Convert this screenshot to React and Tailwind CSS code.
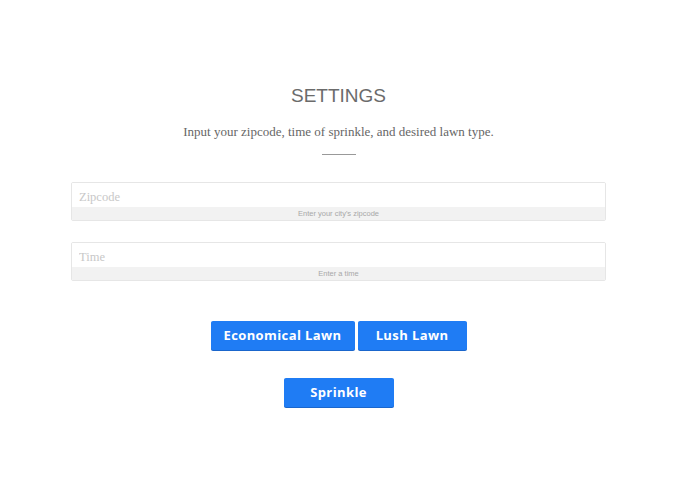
import React from 'react';

function Field({ placeholder, hint }) {
    return (
        <div className='w-[535px] border border-[#e6e6e6] rounded-[2px] overflow-hidden'>
            <input
                type='text'
                placeholder={placeholder}
                className='block w-full h-[24px] px-[7px] pt-[5px] bg-white text-[12.5px] text-[#555] placeholder:text-[#c8c8c8] outline-none'
                style={{ fontFamily: '"Liberation Serif", Georgia, serif' }}
            />
            <div
                className='h-[13px] bg-[#f2f2f2] text-center text-[7.5px] leading-[13px] text-[#a8a8a8]'
                style={{ fontFamily: '"Liberation Sans", Arial, sans-serif' }}
            >
                {hint}
            </div>
        </div>
    );
}

function BlueButton({ children, className }) {
    return (
        <button
            type='button'
            className={`h-[29px] bg-[#1f7cf4] text-white text-[13px] font-bold tracking-[0.4px] rounded-[2px] shadow-[0_1px_0_#1a66cc] ${className}`}
            style={{ fontFamily: '"Open Sans", sans-serif' }}
        >
            {children}
        </button>
    );
}

export default function App() {
    return (
        <section className='min-h-[494px] bg-white flex flex-col items-center pt-[84px] pr-[18px]'>
            <h1
                className='text-[19px] leading-[24px] text-[#6b6b6b]'
                style={{ fontFamily: '"Liberation Sans", Arial, sans-serif' }}
            >
                SETTINGS
            </h1>
            <p
                className='mt-[15px] text-[13px] leading-[18px] text-[#666]'
                style={{ fontFamily: '"Liberation Serif", Georgia, serif' }}
            >
                Input your zipcode, time of sprinkle, and desired lawn type.
            </p>
            <div className='mt-[13px] w-[34px] h-[1px] bg-[#999]' />

            <div className='mt-[27px] flex flex-col gap-[21px]'>
                <Field placeholder='Zipcode' hint="Enter your city's zipcode" />
                <Field placeholder='Time' hint='Enter a time' />
            </div>

            <div className='mt-[40px] flex gap-[3px]'>
                <BlueButton className='w-[144px]'>Economical Lawn</BlueButton>
                <BlueButton className='w-[109px]'>Lush Lawn</BlueButton>
            </div>

            <BlueButton className='mt-[28px] w-[110px]'>Sprinkle</BlueButton>
        </section>
    );
}
